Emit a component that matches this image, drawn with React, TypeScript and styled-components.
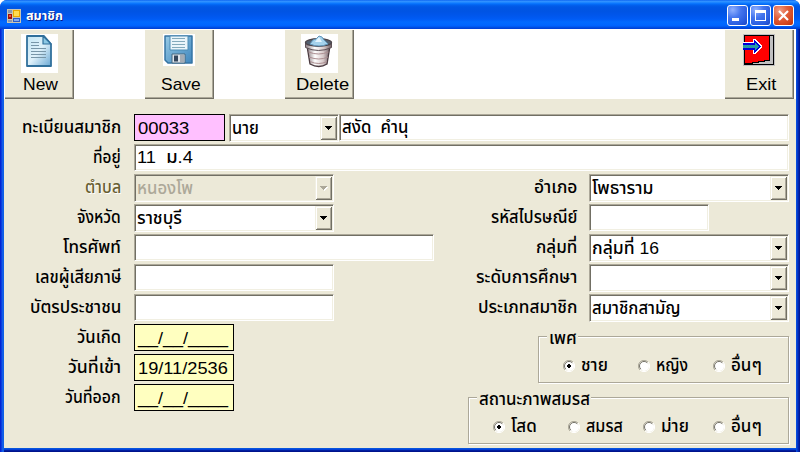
import React, { useLayoutEffect, useRef, useState } from "react";
import styled, { createGlobalStyle, css } from "styled-components";

const Global = createGlobalStyle`
  * { box-sizing: border-box; }
  html, body { margin: 0; background: #fff; }
  body { font-family: "Liberation Sans", "Noto Sans Thai", "Noto Sans", sans-serif; font-size: 17px; font-weight: 500; color: #000; overflow: hidden; }
`;

const FitBox = styled.span<{ $w: number }>`
  display: block;
  flex: none;
  width: ${(p) => p.$w}px;
  white-space: pre;
`;
const FitInner = styled.span`
  display: inline-block;
  transform-origin: 0 50%;
`;

/* Text condensed or stretched horizontally to a fixed advance width. */
function Fit({ w, children }: { w: number; children: string }) {
  const ref = useRef<HTMLSpanElement>(null);
  const [k, setK] = useState(1);
  useLayoutEffect(() => {
    if (ref.current) setK(w / ref.current.offsetWidth);
  }, [w, children]);
  return (
    <FitBox $w={w}>
      <FitInner ref={ref} style={{ transform: `scaleX(${k})` }}>{children}</FitInner>
    </FitBox>
  );
}

const Window = styled.div`
  width: 800px;
  height: 452px;
  display: flex;
  flex-direction: column;
  border-radius: 7px 7px 0 0;
  overflow: hidden;
  background: linear-gradient(90deg, #0019cf 0, #0831d9 1px, #166aee 3px, #0855dd 4px, #0855dd 796px, #0441d8 797px, #001ea0 799px, #00138c 800px);
`;
const TitleBar = styled.header`
  height: 29px;
  flex: none;
  display: flex;
  align-items: center;
  padding: 2px 6px 0 7px;
  background: linear-gradient(180deg, #0058ee 0, #3593ff 1px, #288eff 2px, #127dff 3px, #036ffc 4px, #0262ee 5px, #0057e5 7px, #0054e3 11px, #0056eb 15px, #005bf5 19px, #026afe 22px, #0066ff 25px, #0061fc 26px, #0048d8 28px, #003dd7 29px);
`;
const Caption = styled.div`
  margin-left: 5px;
  flex: 1;
  color: #fff;
  font-size: 13px;
  line-height: 20px;
  font-weight: 700;
  text-shadow: 1px 1px 0 #0a1883;
`;
const CaptionButtons = styled.div`
  display: flex;
  gap: 2px;
`;
const CaptionButton = styled.span<{ $close?: boolean }>`
  width: 21px;
  height: 21px;
  border: 1px solid #fff;
  border-radius: 3px;
  background: ${(p) =>
    p.$close
      ? "radial-gradient(circle at 30% 25%, #f0a088 0, #e2603c 40%, #d2451c 75%, #b43010 100%)"
      : "radial-gradient(circle at 25% 20%, #8fb0ff 0, #4576ee 38%, #2a5ee0 72%, #1a45c4 100%)"};
  svg { display: block; }
`;
const Client = styled.main`
  flex: 1;
  margin: 0 4px 4px;
  background: #ece9d8;
  box-shadow: 0 1px 0 #0855dd, 0 2px 0 #0441d8, 0 3px 0 #001ea0, 0 4px 0 #00138c;
`;
const Toolbar = styled.nav`
  height: 70px;
  display: flex;
  gap: 70px;
  padding-right: 2px;
  background: #fff;
`;
const ToolButton = styled.button<{ $end?: boolean }>`
  width: 70px;
  height: 70px;
  margin: 0 0 0 ${(p) => (p.$end ? "auto" : "0")};
  padding: 5px 0 0;
  border: 0;
  background: #ece9d8;
  box-shadow: inset 1px 1px 0 #fff, inset -1px -1px 0 #716f64, inset -2px -2px 0 #aca899;
  display: flex;
  flex-direction: column;
  align-items: center;
  font: inherit;
  color: #000;
`;
const IconSlot = styled.span`
  height: 41px;
  svg { display: block; }
`;
const ToolLabel = styled.span`
  line-height: 20px;
  padding-left: 3px;
`;
const Form = styled.form`
  padding: 15px 7px 0 0;
`;
const Columns = styled.div`
  display: flex;
  justify-content: space-between;
`;
const Column = styled.div<{ $w: number }>`
  width: ${(p) => p.$w}px;
`;
const Row = styled.div`
  height: 30px;
  display: flex;
  align-items: flex-start;
`;
const LabelBox = styled.label<{ $w: number; $gap: number; $off?: boolean }>`
  width: ${(p) => p.$w}px;
  padding-right: ${(p) => p.$gap}px;
  flex: none;
  display: flex;
  justify-content: flex-end;
  line-height: 28px;
  ${(p) => p.$off && css`color: #686032; text-shadow: 1px 1px 0 #fff;`}
`;
const sunken = css`
  border: 1px solid;
  border-color: #aca899 #fff #fff #aca899;
  box-shadow: inset 1px 1px 0 #716f64, inset -1px -1px 0 #f1efe2;
`;
const TextBox = styled.div<{ $w: number }>`
  ${sunken}
  width: ${(p) => p.$w}px;
  height: 27px;
  flex: none;
  padding-left: 2px;
  line-height: 26px;
  background: #fff;
`;
const FlatBox = styled.div<{ $w: number; $bg: string }>`
  width: ${(p) => p.$w}px;
  height: 27px;
  flex: none;
  border: 1px solid #000;
  padding-left: 3px;
  line-height: 27px;
  background: ${(p) => p.$bg};
`;
const ComboBox = styled.div<{ $w: number; $off?: boolean }>`
  ${sunken}
  width: ${(p) => p.$w}px;
  height: 28px;
  flex: none;
  display: flex;
  justify-content: space-between;
  padding: 1px 1px 1px 2px;
  line-height: 25px;
  background: ${(p) => (p.$off ? "#ece9d8" : "#fff")};
  color: ${(p) => (p.$off ? "#aca899" : "#000")};
`;
const DropButton = styled.span`
  width: 17px;
  height: 24px;
  margin-left: auto;
  background: #ece9d8;
  box-shadow: inset 1px 1px 0 #f1efe2, inset -1px -1px 0 #716f64, inset 2px 2px 0 #fff, inset -2px -2px 0 #aca899;
  svg { display: block; }
`;
const FirstRow = styled(Row)`
  ${ComboBox} { margin-left: 4px; }
`;
const Group = styled.fieldset<{ $w: number; $top: number }>`
  width: ${(p) => p.$w}px;
  height: 47px;
  margin: ${(p) => p.$top}px 0 0 auto;
  padding: 0 0 0 24px;
  border: 1px solid #aca899;
  box-shadow: 1px 1px 0 #fff, inset 1px 1px 0 #fff;
  display: flex;
  flex-direction: column;
`;
const Legend = styled.div`
  align-self: flex-start;
  height: 14px;
  margin: -5px 0 0 -16px;
  padding: 0 1px 0 2px;
  line-height: 13px;
  background: #ece9d8;
`;
const Options = styled.div`
  display: flex;
  height: 30px;
  margin-top: 5px;
`;
const Option = styled.label<{ $step: number }>`
  width: ${(p) => p.$step}px;
  height: 30px;
  display: flex;
  align-items: center;
  flex: none;
  line-height: 28px;
  svg { flex: none; margin-right: 6px; }
`;

const Arrow = ({ off }: { off?: boolean }) => (
  <DropButton>
    <svg width="17" height="24" shapeRendering="crispEdges">
      {off && <path d="M6 11h7v1h-1v1h-1v1h-1v1h-1v-1h-1v-1h-1v-1h-1z" fill="#fff" />}
      <path d="M5 10h7v1h-1v1h-1v1h-1v1h-1v-1h-1v-1h-1v-1h-1z" fill={off ? "#aca899" : "#000"} />
    </svg>
  </DropButton>
);
const Combo = ({ w, text, tw = 0, off }: { w: number; text?: string; tw?: number; off?: boolean }) => (
  <ComboBox $w={w} $off={off}>
    {text && <Fit w={tw}>{text}</Fit>}
    <Arrow off={off} />
  </ComboBox>
);
const LeftLabel = ({ text, w, off }: { text: string; w: number; off?: boolean }) => (
  <LabelBox $w={130} $gap={13} $off={off}><Fit w={w}>{text}</Fit></LabelBox>
);
const RightLabel = ({ text, w }: { text: string; w: number }) => (
  <LabelBox $w={125} $gap={12}><Fit w={w}>{text}</Fit></LabelBox>
);
const Radio = ({ text, w, on, step = 75 }: { text: string; w: number; on?: boolean; step?: number }) => (
  <Option $step={step}>
    <svg width="12" height="12" viewBox="0 0 12 12">
      <circle cx="6" cy="6" r="5" fill="#fff" />
      <path d="M10 2A5.5 5.5 0 0 0 2 10" fill="none" stroke="#aca899" />
      <path d="M9.3 2.8A4.5 4.5 0 0 0 2.8 9.2" fill="none" stroke="#716f64" />
      <path d="M10 2A5.5 5.5 0 0 1 2 10" fill="none" stroke="#fff" />
      {on && <path d="M5 4h2v1h1v2h-1v1h-2v-1h-1v-2h1z" fill="#000" shapeRendering="crispEdges" />}
    </svg>
    <Fit w={w}>{text}</Fit>
  </Option>
);

const AppIcon = () => (
  <svg width="14" height="14" shapeRendering="crispEdges">
    <path d="M0 0h14v14h-14z" fill="#c9c5b2" />
    <path d="M1 1h4v3h-4z" fill="#8a98b0" />
    <path d="M6 1h7v7h-7z" fill="#e8a800" />
    <path d="M7 2h5v5h-5z" fill="#ffdc50" />
    <path d="M1 5h4v5h-4z" fill="#a01008" />
    <path d="M2 6h2v2h-2z" fill="#f05038" />
    <path d="M6 9h7v4h-7z" fill="#2a5cc8" />
    <path d="M7 10h5v2h-5z" fill="#80a8f0" />
    <path d="M1 11h4v2h-4z" fill="#8a98b0" />
  </svg>
);
const NewIcon = () => (
  <svg width="37" height="39">
    <defs>
      <linearGradient id="paper" x1="0" y1="0" x2="1" y2="1">
        <stop offset="0" stopColor="#c4e6f4" /><stop offset=".5" stopColor="#dff1fa" /><stop offset="1" stopColor="#6aa8d4" />
      </linearGradient>
    </defs>
    <path d="M0 0h37v39h-37z" fill="#fff" />
    <path d="M6 2h17l7 8v22h-24z" fill="url(#paper)" stroke="#30709c" strokeWidth="1.8" strokeLinejoin="round" />
    <path d="M22 2v8h8z" fill="#8cc8e4" stroke="#30709c" strokeWidth="1.2" strokeLinejoin="round" />
    <path d="M10 8.500h8M10 11.500h8M10 14.500h15M10 17.500h15M10 20.500h15M10 23.500h15" stroke="#7896a8" />
  </svg>
);
const SaveIcon = () => (
  <svg width="32" height="32">
    <defs>
      <linearGradient id="disk" x1="0" y1="0" x2="1" y2="1">
        <stop offset="0" stopColor="#98cbe6" /><stop offset="1" stopColor="#3f86bd" />
      </linearGradient>
    </defs>
    <path d="M0 0h32v32h-32z" fill="#fff" />
    <path d="M2 2h27v27h-24l-3-3z" fill="url(#disk)" stroke="#3474a4" strokeWidth="1.5" strokeLinejoin="round" />
    <path d="M7 2h18v14h-18z" fill="#eaf5fa" stroke="#4c8cb4" />
    <path d="M9 4.500h13M9 7.500h13M9 10.500h13M9 13.500h13" stroke="#84aabb" />
    <path d="M9 20h13v9h-13z" fill="#dfe4ea" stroke="#476880" />
    <path d="M11 21.500h4v6h-4z" fill="#34465c" />
    <path d="M17 21h4v7h-4z" fill="#a4acb5" />
  </svg>
);
const TrashIcon = () => (
  <svg width="37" height="39">
    <defs>
      <linearGradient id="can" x1="0" x2="1">
        <stop offset="0" stopColor="#8a7c80" /><stop offset=".35" stopColor="#fff" /><stop offset=".7" stopColor="#d8caca" /><stop offset="1" stopColor="#705f65" />
      </linearGradient>
    </defs>
    <path d="M0 0h37v39h-37z" fill="#fff" />
    <path d="M6 12l3 18q9 5 17 0l3-18z" fill="url(#can)" stroke="#4b3b40" strokeWidth="1.3" />
    <path d="M7.500 18q10 4 20 0M8 23q10 4 19 0M9 27.500q9 4 17 0" fill="none" stroke="#ab8e91" />
    <path d="M4.500 8.500v5q13 6 26 0v-5z" fill="url(#can)" stroke="#5c5056" />
    <ellipse cx="17.500" cy="8.500" rx="13" ry="3.800" fill="#526070" stroke="#4e464c" strokeWidth="1.3" />
    <path d="M9 10l3-4 3-1 3-3 3 1 2 3 4 4q-9 4-18 0z" fill="#a4d2ec" stroke="#6297bb" />
    <path d="M14 8l4-5 3 5z" fill="#e4f5ff" />
  </svg>
);
const ExitIcon = () => (
  <svg width="32" height="32" shapeRendering="crispEdges">
    <defs>
      <pattern id="dither" width="2" height="2" patternUnits="userSpaceOnUse">
        <path d="M0 0h2v2h-2z" fill="#00b8b8" /><path d="M0 0h1v1h-1zM1 1h1v1h-1z" fill="#4a8090" />
      </pattern>
    </defs>
    <path d="M0 0h32v32h-32z" fill="#c0c0c0" />
    <path d="M1 1h30v30h-30z" fill="#000" />
    <path d="M27 2h3v28h-20v-1h6v-1h6v-1h5z" fill="#c0c0c0" />
    <path d="M2 2h24v24h-5v1h-6v1h-6v1h-7z" fill="#f00" />
    <path d="M0 8h10v-3h2l7 7v1l-7 7h-2v-4h-10z" fill="#fff" />
    <path d="M0 9h11v-3l7 6.500-7 6.500v-3h-11z" fill="#0000d8" />
    <path d="M0 11h12v-2l4 3.500-4 3.500v-2h-12z" fill="url(#dither)" />
  </svg>
);

export default function App() {
  return (
    <Window>
      <Global />
      <TitleBar>
        <AppIcon />
        <Caption><Fit w={37}>สมาชิก</Fit></Caption>
        <CaptionButtons>
          <CaptionButton><svg width="19" height="19"><path d="M4 12h7v3h-7z" fill="#fff" /></svg></CaptionButton>
          <CaptionButton><svg width="19" height="19"><path d="M4 4h11v11h-11zM5 7v7h9v-7z" fill="#fff" fillRule="evenodd" /></svg></CaptionButton>
          <CaptionButton $close><svg width="19" height="19"><path d="M5 5l9 9M14 5l-9 9" stroke="#fff" strokeWidth="2.2" /></svg></CaptionButton>
        </CaptionButtons>
      </TitleBar>
      <Client>
        <Toolbar>
          <ToolButton><IconSlot><NewIcon /></IconSlot><ToolLabel><Fit w={35}>New</Fit></ToolLabel></ToolButton>
          <ToolButton><IconSlot><SaveIcon /></IconSlot><ToolLabel><Fit w={40}>Save</Fit></ToolLabel></ToolButton>
          <ToolButton><IconSlot><TrashIcon /></IconSlot><ToolLabel><Fit w={53}>Delete</Fit></ToolLabel></ToolButton>
          <ToolButton $end><IconSlot><ExitIcon /></IconSlot><ToolLabel><Fit w={30}>Exit</Fit></ToolLabel></ToolButton>
        </Toolbar>
        <Form>
          <FirstRow>
            <LeftLabel text="ทะเบียนสมาชิก" w={99} />
            <FlatBox $w={91} $bg="#ffc0ff"><Fit w={51}>00033</Fit></FlatBox>
            <Combo w={110} text="นาย" tw={27} />
            <TextBox $w={450}><Fit w={66}>สงัด  คำนุ</Fit></TextBox>
          </FirstRow>
          <Row>
            <LeftLabel text="ที่อยู่" w={28} />
            <TextBox $w={655}><Fit w={56}>11  ม.4</Fit></TextBox>
          </Row>
          <Columns>
            <Column $w={430}>
              <Row><LeftLabel text="ตำบล" w={36} off /><Combo w={200} text="หนองโพ" tw={56} off /></Row>
              <Row><LeftLabel text="จังหวัด" w={44} /><Combo w={200} text="ราชบุรี" tw={45} /></Row>
              <Row><LeftLabel text="โทรศัพท์" w={58} /><TextBox $w={300} /></Row>
              <Row><LeftLabel text="เลขผู้เสียภาษี" w={86} /><TextBox $w={200} /></Row>
              <Row><LeftLabel text="บัตรประชาชน" w={91} /><TextBox $w={200} /></Row>
              <Row><LeftLabel text="วันเกิด" w={44} /><FlatBox $w={100} $bg="#ffffc0"><Fit w={90}>__/__/____</Fit></FlatBox></Row>
              <Row><LeftLabel text="วันที่เข้า" w={53} /><FlatBox $w={100} $bg="#ffffc0"><Fit w={90}>19/11/2536</Fit></FlatBox></Row>
              <Row><LeftLabel text="วันที่ออก" w={56} /><FlatBox $w={100} $bg="#ffffc0"><Fit w={90}>__/__/____</Fit></FlatBox></Row>
            </Column>
            <Column $w={325}>
              <Row><RightLabel text="อำเภอ" w={43} /><Combo w={200} text="โพธาราม" tw={62} /></Row>
              <Row><RightLabel text="รหัสไปรษณีย์" w={86} /><TextBox $w={120} /></Row>
              <Row><RightLabel text="กลุ่มที่" w={41} /><Combo w={200} text="กลุ่มที่ 16" tw={67} /></Row>
              <Row><RightLabel text="ระดับการศึกษา" w={101} /><Combo w={200} /></Row>
              <Row><RightLabel text="ประเภทสมาชิก" w={99} /><Combo w={200} text="สมาชิกสามัญ" tw={89} /></Row>
              <Group $w={250} $top={12}>
                <Legend><Fit w={28}>เพศ</Fit></Legend>
                <Options>
                  <Radio text="ชาย" w={27} on />
                  <Radio text="หญิง" w={32} />
                  <Radio text="อื่นๆ" w={31} />
                </Options>
              </Group>
              <Group $w={320} $top={14}>
                <Legend><Fit w={111}>สถานะภาพสมรส</Fit></Legend>
                <Options>
                  <Radio text="โสด" w={26} on />
                  <Radio text="สมรส" w={37} />
                  <Radio text="ม่าย" w={28} step={70} />
                  <Radio text="อื่นๆ" w={31} />
                </Options>
              </Group>
            </Column>
          </Columns>
        </Form>
      </Client>
    </Window>
  );
}
